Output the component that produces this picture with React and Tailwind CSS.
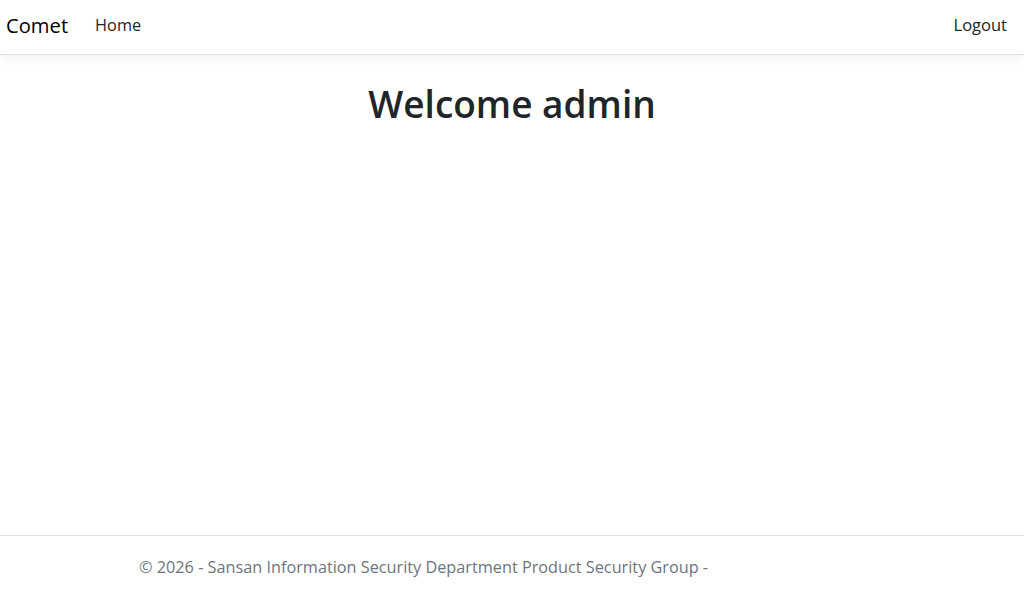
export default function App() {
  const font = { fontFamily: '"Open Sans", "Noto Sans", sans-serif' };
  return (
    <div className="flex h-[595px] flex-col bg-white text-[#212529]" style={font}>
      <header className="flex h-[55px] items-center justify-between border-b border-[#dee2e6] bg-white pb-[4px] pl-[6px] pr-[17px] shadow-[0_4px_12px_rgba(0,0,0,0.05)]">
        <nav className="flex items-center">
          <a className="text-[20.2px] text-black">Comet</a>
          <a className="ml-[27px] text-[16.3px] text-[#212529]">Home</a>
        </nav>
        <a className="text-[16.5px] text-[#212529]">Logout</a>
      </header>
      <main className="flex-1 pt-[27px] text-center">
        <h1 className="text-[37px] font-semibold leading-[1.2]">Welcome admin</h1>
      </main>
      <footer className="h-[60px] border-t border-[#dee2e6] pl-[139px] leading-[62px] text-[16.25px] text-[#6c757d]">
        © 2026 - Sansan Information Security Department Product Security Group -
      </footer>
    </div>
  );
}
